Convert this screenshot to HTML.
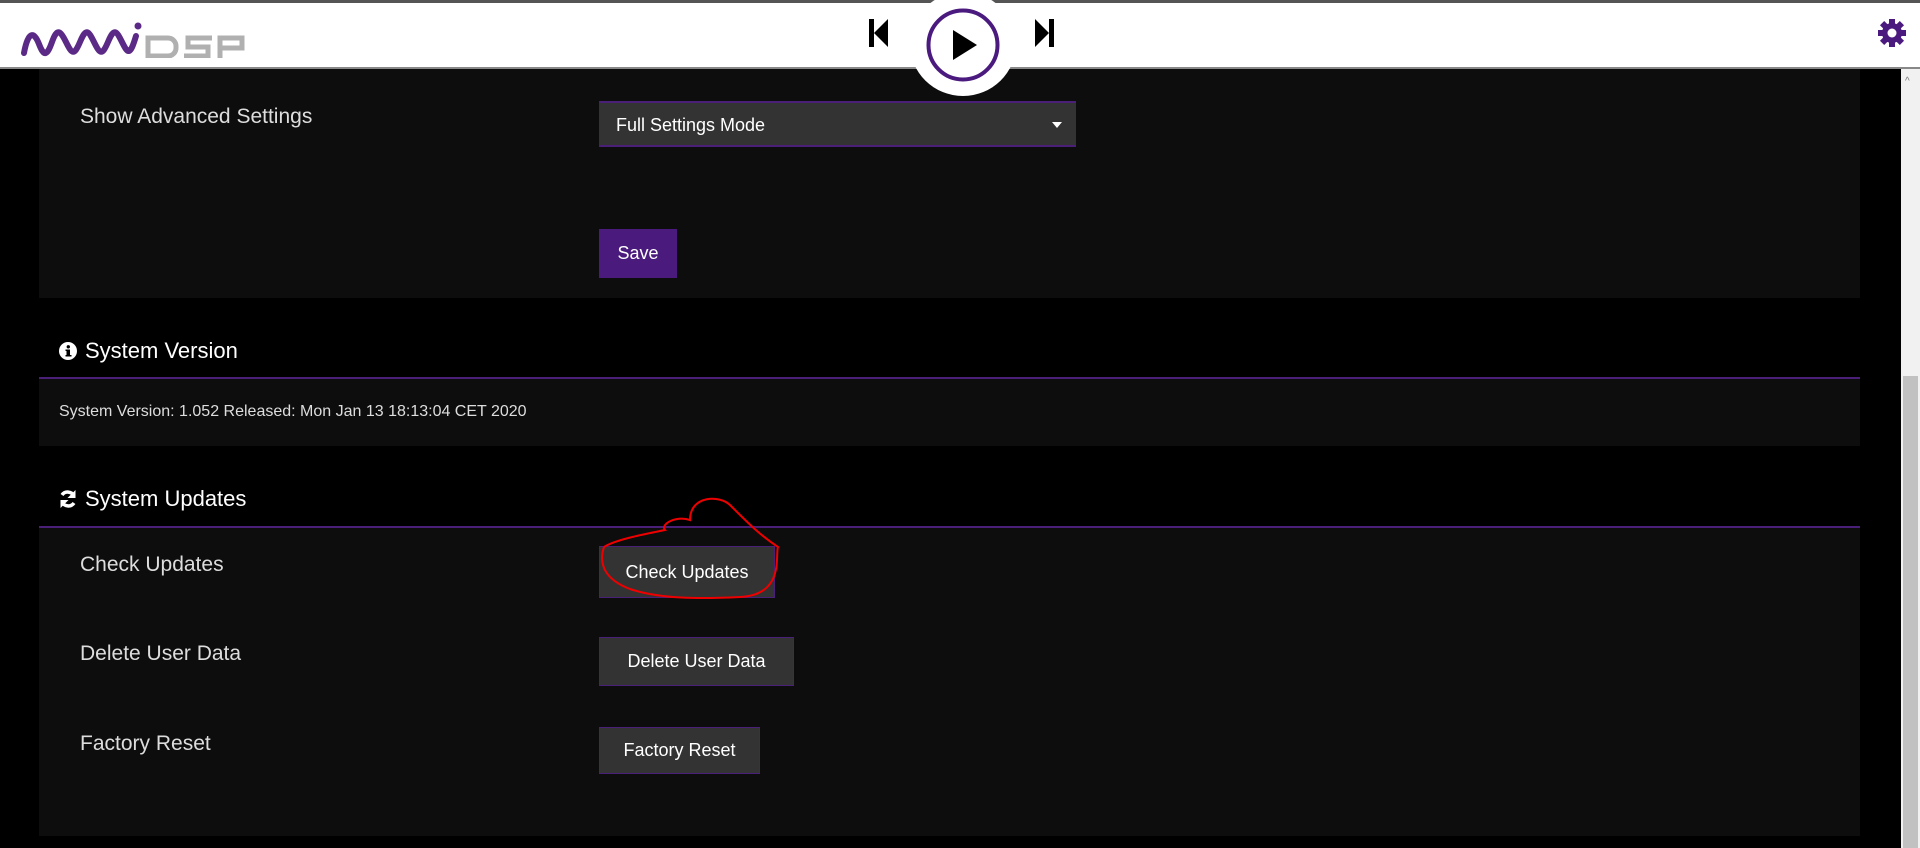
<!DOCTYPE html>
<html><head><meta charset="utf-8"><style>
*{margin:0;padding:0;box-sizing:border-box}
body{width:1920px;height:848px;background:#000;position:relative;overflow:hidden;font-family:"Liberation Sans",sans-serif;color:#fff}
.abs{position:absolute}
.hdr{left:0;top:0;width:1920px;height:69px;background:#fff;border-top:3px solid #555;border-bottom:2px solid #888}
.panel{background:#0d0d0d;left:39px;width:1821px}
.lbl{color:#ddd;font-size:21px;left:80px}
.btn{background:#333;border:1px solid #4a1f78;color:#fff;font-size:18px;display:flex;align-items:center;justify-content:center;left:599px}
.h{font-size:22px;left:59px;display:flex;align-items:center;gap:8px}
.line{left:39px;width:1821px;height:2px;background:#4a1f78}
</style></head><body>
<div class="abs panel" style="top:69px;height:229px"></div>
<div class="abs lbl" style="top:105px">Show Advanced Settings</div>
<div class="abs" style="left:599px;top:101px;width:477px;height:46px;background:#333;border-top:2px solid #4a1f78;border-bottom:2px solid #4a1f78;font-size:18px;padding:12px 17px">Full Settings Mode<span style="position:absolute;right:14px;top:19px;border:5px solid transparent;border-top:6px solid #fff"></span></div>
<div class="abs" style="left:599px;top:229px;width:78px;height:49px;background:#4a1a7c;font-size:18px;display:flex;align-items:center;justify-content:center">Save</div>

<div class="abs h" style="top:338px"><svg width="18" height="18" viewBox="0 0 18 18"><circle cx="9" cy="9" r="9" fill="#fff"/><rect x="7.5" y="7.5" width="3.5" height="7" fill="#000"/><rect x="6.5" y="7.5" width="4.5" height="1.5" fill="#000"/><rect x="6.5" y="13" width="6" height="1.5" fill="#000"/><circle cx="9.3" cy="4.8" r="1.7" fill="#000"/></svg>System Version</div>
<div class="abs line" style="top:377px"></div>
<div class="abs panel" style="top:379px;height:67px"></div>
<div class="abs" style="left:59px;top:403px;font-size:16px;color:#ddd">System Version: 1.052 Released: Mon Jan 13 18:13:04 CET 2020</div>

<div class="abs h" style="top:486px"><svg width="18" height="20" viewBox="0 0 18 20"><path d="M15 7A7 7 0 0 0 3 6" stroke="#fff" stroke-width="3.5" fill="none"/><path d="M16.5 1v8h-8z" fill="#fff"/><path d="M3 13a7 7 0 0 0 12 1" stroke="#fff" stroke-width="3.5" fill="none"/><path d="M1.5 19v-8h8z" fill="#fff"/></svg>System Updates</div>
<div class="abs line" style="top:526px"></div>
<div class="abs panel" style="top:528px;height:308px"></div>
<div class="abs lbl" style="top:553px">Check Updates</div>
<div class="abs btn" style="top:546px;width:176px;height:52px">Check Updates</div>
<div class="abs lbl" style="top:642px">Delete User Data</div>
<div class="abs btn" style="top:637px;width:195px;height:49px">Delete User Data</div>
<div class="abs lbl" style="top:732px">Factory Reset</div>
<div class="abs btn" style="top:727px;width:161px;height:47px">Factory Reset</div>
<svg class="abs" style="left:590px;top:495px" width="200" height="110" viewBox="0 0 200 110"><path d="M14 52C8 70 16 85 40 94 70 104 110 104 150 102 195 100 185 60 188 52 170 40 160 30 140 10 130 0 100 0 100 25 85 20 70 30 75 35 50 40 25 45 14 52" stroke="#e00" stroke-width="2" fill="none"/></svg>

<div class="abs" style="left:1901px;top:69px;width:19px;height:779px;background:#f1f1f1"></div>
<div class="abs" style="left:1903px;top:376px;width:15px;height:472px;background:#c1c1c1"></div>
<div class="abs" style="left:1905px;top:76px;color:#777;font-size:10px">^</div>

<div class="abs hdr"></div>
<div class="abs" style="left:910px;top:-8px;width:106px;height:104px;border-radius:50%;background:#fff"></div>
<svg class="abs" style="left:20px;top:16px" width="230" height="42" viewBox="0 0 230 42"><path d="M4 37C8 15 14 15 19 28S27 40 32 26 40 14 46 26 54 40 60 26 68 14 74 26 82 40 88 26 96 14 102 26 110 40 116 20" stroke="#5b2a86" stroke-width="6" fill="none" stroke-linecap="round"/><circle cx="118" cy="10" r="3.5" fill="#5b2a86"/><g stroke="#b0b0b0" stroke-width="5" fill="none"><path d="M128 40V22h20a8 8 0 0 1 8 8v2a8 8 0 0 1-8 8z"/><path d="M192 22h-24v9h20v9h-24"/><path d="M200 42V22h22v10h-22"/></g></svg>
<svg class="abs" style="left:869px;top:19px" width="20" height="28" viewBox="0 0 20 28"><rect x="0" y="0" width="5" height="28"/><path d="M5 14L19 0V28Z"/></svg>
<svg class="abs" style="left:1034px;top:19px" width="20" height="28" viewBox="0 0 20 28"><rect x="15" y="0" width="5" height="28"/><path d="M15 14L1 0V28Z"/></svg>
<svg class="abs" style="left:926px;top:8px" width="74" height="74" viewBox="0 0 74 74"><circle cx="37" cy="37" r="34.5" stroke="#4b1a7f" stroke-width="4" fill="none"/><path d="M27 22L51 37 27 52Z"/></svg>
<svg class="abs" style="left:1878px;top:19px" width="28" height="28" viewBox="0 0 28 28"><g fill="#4b1a7f" transform="translate(14 14)"><rect x="-3" y="-14" width="6" height="28"/><rect x="-3" y="-14" width="6" height="28" transform="rotate(45)"/><rect x="-3" y="-14" width="6" height="28" transform="rotate(90)"/><rect x="-3" y="-14" width="6" height="28" transform="rotate(135)"/><circle r="10"/></g><circle cx="14" cy="14" r="4.5" fill="#fff"/></svg>
</body></html>
